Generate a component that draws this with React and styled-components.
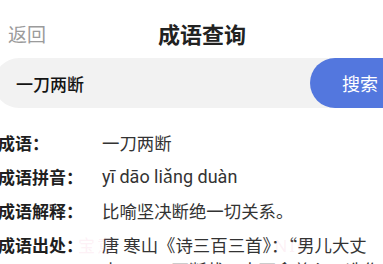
import React from "react";
import styled, { createGlobalStyle } from "styled-components";

const Global = createGlobalStyle`
  html, body { margin: 0; padding: 0; background: #ffffff; overflow: hidden; }
  body { font-family: "Noto Sans CJK SC", "Noto Sans", sans-serif; }
`;

const Page = styled.div`
  width: 404px;
  position: relative;
  background: #fff;
`;

const Header = styled.div`
  display: grid;
  grid-template-columns: 1fr auto 1fr;
  align-items: center;
  height: 50px;
  padding-top: 8px;
`;

const Back = styled.div`
  padding-left: 8px;
  font-size: 19px;
  color: #9b9b9b;
  line-height: 1;
`;

const Title = styled.div`
  font-size: 22px;
  font-weight: 700;
  color: #222;
  line-height: 1;
`;

const SearchBar = styled.div`
  display: flex;
  align-items: stretch;
  height: 50px;
  width: 416px;
  margin-left: -6px;
  background: #f2f2f2;
  border-radius: 25px;
`;

const Input = styled.div`
  flex: 1;
  display: flex;
  align-items: center;
  padding-left: 22px;
  font-size: 17px;
  font-weight: 500;
  color: #141414;
`;

const Button = styled.div`
  width: 100px;
  display: flex;
  align-items: center;
  justify-content: center;
  background: #5377de;
  color: #fff;
  font-size: 18px;
  border-radius: 25px;
`;

const Details = styled.div`
  margin-top: 22px;
  margin-left: -2px;
  width: 392px;
  display: flex;
  flex-direction: column;
  gap: 9px;
`;

const Row = styled.div`
  display: grid;
  grid-template-columns: 104px 1fr;
  line-height: 25px;
  font-size: 17px;
`;

const Label = styled.div`
  font-weight: 700;
  color: #1f1f1f;
`;

const Value = styled.div`
  color: #333;
  font-size: ${(p) => (p.$latin ? "18px" : "17.4px")};
  font-family: ${(p) => (p.$latin ? 'Roboto, "Noto Sans CJK SC", sans-serif' : '"Noto Sans CJK SC", sans-serif')};
`;

const Watermark = styled.div`
  position: absolute;
  left: 78px;
  top: 232px;
  font-size: 17px;
  color: rgba(240, 150, 190, 0.14);
  letter-spacing: 2px;
  pointer-events: none;
  white-space: nowrap;
  font-family: "Noto Sans", "Noto Sans CJK SC", sans-serif;
`;

const rows = [
  { label: "成语：", value: "一刀两断" },
  { label: "成语拼音：", value: "yī dāo liǎng duàn", latin: true },
  { label: "成语解释：", value: "比喻坚决断绝一切关系。" },
  {
    label: "成语出处：",
    value: "唐 寒山《诗三百三首》：“男儿大丈夫，一刀两断截；人面禽兽心，造作何时歇。”",
  },
];

export default function App() {
  return (
    <Page>
      <Global />
      <Header>
        <Back>返回</Back>
        <Title>成语查询</Title>
        <div />
      </Header>
      <SearchBar>
        <Input>一刀两断</Input>
        <Button>搜索</Button>
      </SearchBar>
      <Details>
        {rows.map((r) => (
          <Row key={r.label}>
            <Label>{r.label}</Label>
            <Value $latin={r.latin}>{r.value}</Value>
          </Row>
        ))}
      </Details>
      <Watermark>宝意　　　　　　　　 NIC</Watermark>
    </Page>
  );
}
